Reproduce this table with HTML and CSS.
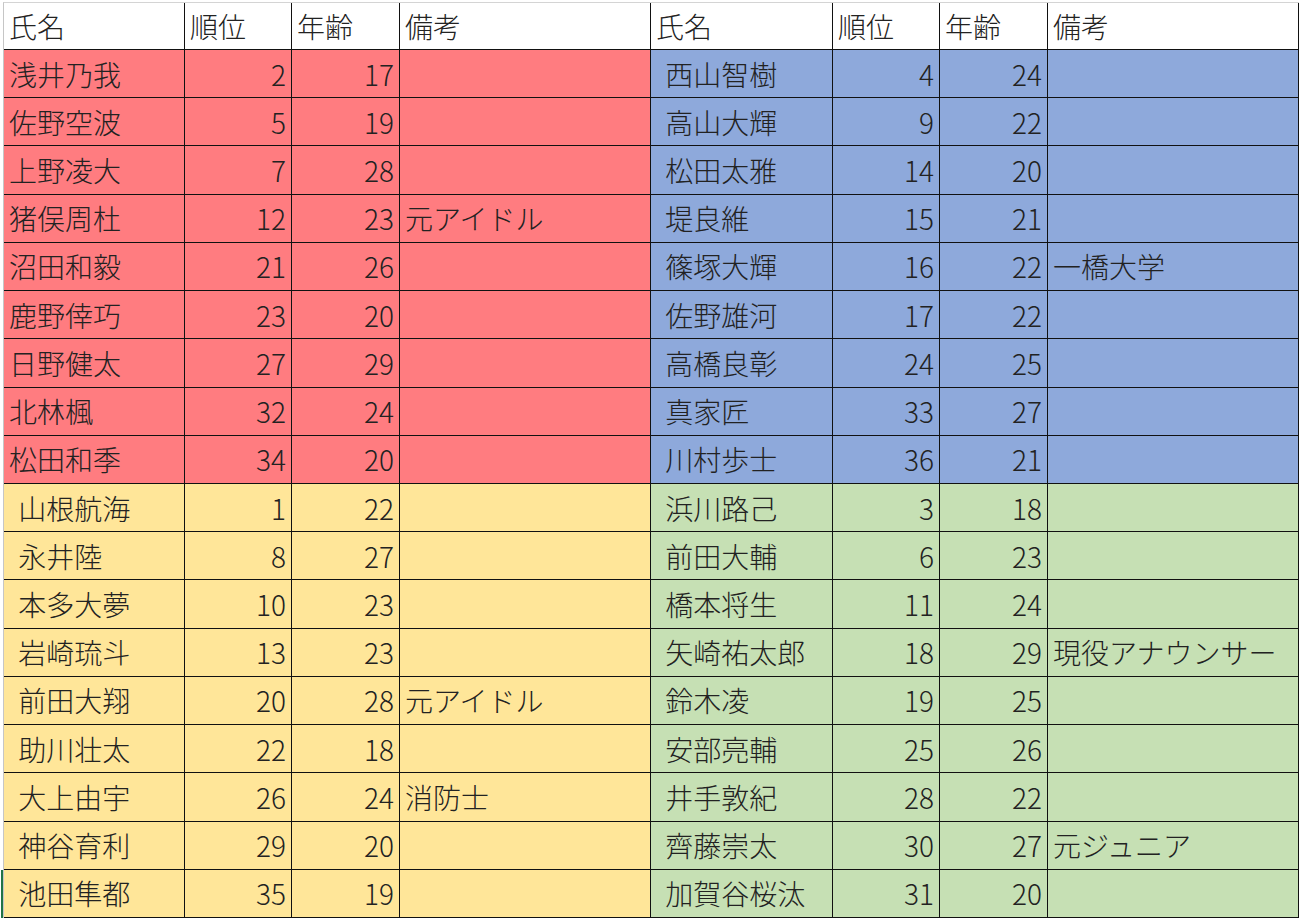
FILE: index.html
```html
<!DOCTYPE html>
<html lang="ja">
<head>
<meta charset="utf-8">
<title>名簿</title>
<link rel="stylesheet" href="styles.css">
</head>
<body>
<div class="sheet">
  <div class="c h">氏名</div><div class="c h">順位</div><div class="c h">年齢</div><div class="c h">備考</div>
  <div class="c h">氏名</div><div class="c h">順位</div><div class="c h">年齢</div><div class="c h">備考</div>

  <div class="c red">浅井乃我</div><div class="c red n">2</div><div class="c red n">17</div><div class="c red"></div>
  <div class="c blue"> 西山智樹</div><div class="c blue n">4</div><div class="c blue n">24</div><div class="c blue"></div>

  <div class="c red">佐野空波</div><div class="c red n">5</div><div class="c red n">19</div><div class="c red"></div>
  <div class="c blue"> 高山大輝</div><div class="c blue n">9</div><div class="c blue n">22</div><div class="c blue"></div>

  <div class="c red">上野凌大</div><div class="c red n">7</div><div class="c red n">28</div><div class="c red"></div>
  <div class="c blue"> 松田太雅</div><div class="c blue n">14</div><div class="c blue n">20</div><div class="c blue"></div>

  <div class="c red">猪俣周杜</div><div class="c red n">12</div><div class="c red n">23</div><div class="c red">元アイドル</div>
  <div class="c blue"> 堤良維</div><div class="c blue n">15</div><div class="c blue n">21</div><div class="c blue"></div>

  <div class="c red">沼田和毅</div><div class="c red n">21</div><div class="c red n">26</div><div class="c red"></div>
  <div class="c blue"> 篠塚大輝</div><div class="c blue n">16</div><div class="c blue n">22</div><div class="c blue">一橋大学</div>

  <div class="c red">鹿野倖巧</div><div class="c red n">23</div><div class="c red n">20</div><div class="c red"></div>
  <div class="c blue"> 佐野雄河</div><div class="c blue n">17</div><div class="c blue n">22</div><div class="c blue"></div>

  <div class="c red">日野健太</div><div class="c red n">27</div><div class="c red n">29</div><div class="c red"></div>
  <div class="c blue"> 高橋良彰</div><div class="c blue n">24</div><div class="c blue n">25</div><div class="c blue"></div>

  <div class="c red">北林楓</div><div class="c red n">32</div><div class="c red n">24</div><div class="c red"></div>
  <div class="c blue"> 真家匠</div><div class="c blue n">33</div><div class="c blue n">27</div><div class="c blue"></div>

  <div class="c red">松田和季</div><div class="c red n">34</div><div class="c red n">20</div><div class="c red"></div>
  <div class="c blue"> 川村歩士</div><div class="c blue n">36</div><div class="c blue n">21</div><div class="c blue"></div>

  <div class="c yel"> 山根航海</div><div class="c yel n">1</div><div class="c yel n">22</div><div class="c yel"></div>
  <div class="c grn"> 浜川路己</div><div class="c grn n">3</div><div class="c grn n">18</div><div class="c grn"></div>

  <div class="c yel"> 永井陸</div><div class="c yel n">8</div><div class="c yel n">27</div><div class="c yel"></div>
  <div class="c grn"> 前田大輔</div><div class="c grn n">6</div><div class="c grn n">23</div><div class="c grn"></div>

  <div class="c yel"> 本多大夢</div><div class="c yel n">10</div><div class="c yel n">23</div><div class="c yel"></div>
  <div class="c grn"> 橋本将生</div><div class="c grn n">11</div><div class="c grn n">24</div><div class="c grn"></div>

  <div class="c yel"> 岩崎琉斗</div><div class="c yel n">13</div><div class="c yel n">23</div><div class="c yel"></div>
  <div class="c grn"> 矢崎祐太郎</div><div class="c grn n">18</div><div class="c grn n">29</div><div class="c grn">現役アナウンサー</div>

  <div class="c yel"> 前田大翔</div><div class="c yel n">20</div><div class="c yel n">28</div><div class="c yel">元アイドル</div>
  <div class="c grn"> 鈴木凌</div><div class="c grn n">19</div><div class="c grn n">25</div><div class="c grn"></div>

  <div class="c yel"> 助川壮太</div><div class="c yel n">22</div><div class="c yel n">18</div><div class="c yel"></div>
  <div class="c grn"> 安部亮輔</div><div class="c grn n">25</div><div class="c grn n">26</div><div class="c grn"></div>

  <div class="c yel"> 大上由宇</div><div class="c yel n">26</div><div class="c yel n">24</div><div class="c yel">消防士</div>
  <div class="c grn"> 井手敦紀</div><div class="c grn n">28</div><div class="c grn n">22</div><div class="c grn"></div>

  <div class="c yel"> 神谷育利</div><div class="c yel n">29</div><div class="c yel n">20</div><div class="c yel"></div>
  <div class="c grn"> 齊藤崇太</div><div class="c grn n">30</div><div class="c grn n">27</div><div class="c grn">元ジュニア</div>

  <div class="c yel"> 池田隼都</div><div class="c yel n">35</div><div class="c yel n">19</div><div class="c yel"></div>
  <div class="c grn"> 加賀谷桜汰</div><div class="c grn n">31</div><div class="c grn n">20</div><div class="c grn"></div>
</div>
</body>
</html>
```
FILE: styles.css
```css
html, body {
  margin: 0;
  padding: 0;
  background: #ffffff;
}
body {
  font-family: "Noto Sans CJK JP", "Noto Sans", sans-serif;
  color: #222222;
}
.sheet {
  position: relative;
  margin: 2px 0 0 3px;
  display: grid;
  grid-template-columns: 181px 107px 108px 251px 182px 107px 108px 251px;
  grid-template-rows: 47px repeat(18, 48.22px);
  border-left: 1px solid #c6c6c6;
  border-top: 1px solid #d4d4d4;
  width: max-content;
}
.sheet::after {
  content: "";
  position: absolute;
  left: -3px;
  bottom: 0;
  width: 2px;
  height: 48px;
  background: #217346;
}
.c {
  box-sizing: border-box;
  border-right: 1px solid #111;
  border-bottom: 1px solid #111;
  display: flex;
  align-items: center;
  padding: 0 6px 0 5px;
  font-size: 28px;
  font-weight: 300;
  line-height: 1;
  white-space: pre;
  word-spacing: 3px;
  overflow: hidden;
}
.n {
  justify-content: flex-end;
  padding-right: 5px;
}
.h { background: #ffffff; }
.red { background: #ff7c80; }
.blue { background: #8ea9db; }
.yel { background: #ffe699; }
.grn { background: #c6e0b4; }
```
